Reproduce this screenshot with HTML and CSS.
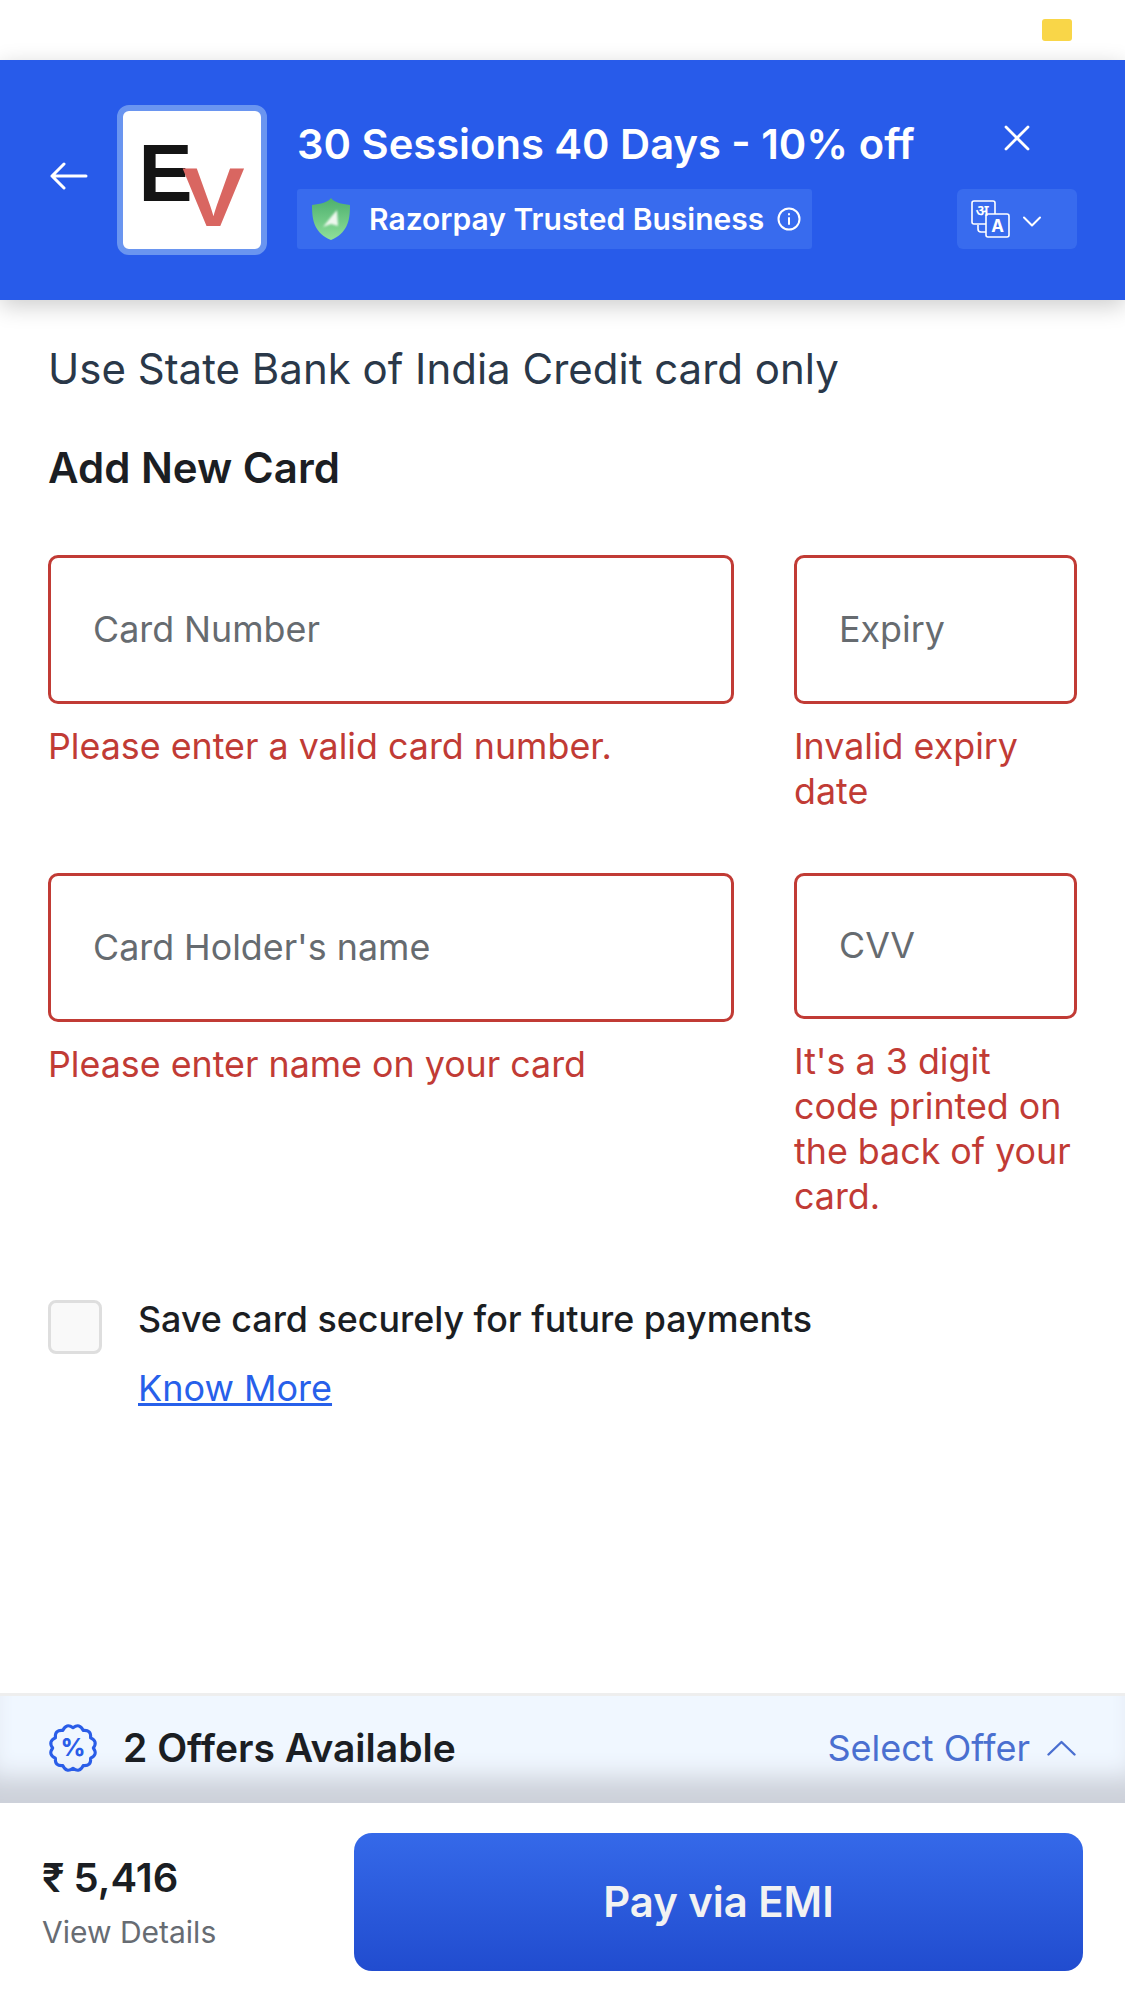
FILE: index.html
```html
<!DOCTYPE html>
<html lang="en">
<head>
    <meta charset="UTF-8">
    <meta name="viewport" content="width=device-width, initial-scale=1.0">
    <title>Checkout</title>
    <link rel="stylesheet" href="styles.css">
</head>
<body>
    <div class="page">
        <!-- Status strip -->
        <div class="topstrip"><span class="topstrip-pill"></span></div>

        <!-- Header -->
        <header class="header">
            <svg class="back-icon" viewBox="0 0 38 28" fill="none" stroke="#fff" stroke-width="3" stroke-linecap="round" stroke-linejoin="round">
                <path d="M2 14H36M14 2L2 14L14 26"/>
            </svg>
            <div class="logo">
                <svg viewBox="0 0 138 138" width="138" height="138">
                    <text class="logo-e" x="15.5" y="90">E</text>
                    <text class="logo-v" transform="translate(59 115) scale(1.16 1.03)">V</text>
                </svg>
            </div>
            <div class="header-info">
                <h1 class="merchant">30 Sessions 40 Days - 10% off</h1>
                <div class="trust">
                    <svg class="shield" viewBox="0 0 40 46">
                        <defs>
                            <linearGradient id="shieldFill" x1="0" y1="0" x2="0" y2="1">
                                <stop offset="0" stop-color="#4caf6d"/>
                                <stop offset="1" stop-color="#8fe09a"/>
                            </linearGradient>
                            <filter id="soft"><feGaussianBlur stdDeviation="1"/></filter>
                        </defs>
                        <path d="M20 2C23 6 30 8 39 9C39 26 36 37 20 44C4 37 1 26 1 9C10 8 17 6 20 2Z" fill="url(#shieldFill)"/>
                        <path d="M12 31L20 21L26 14L27 30L20 28Z" fill="#eef8ee" filter="url(#soft)"/>
                    </svg>
                    <span class="trust-text">Razorpay Trusted Business</span>
                    <svg class="info-icon" viewBox="0 0 24 24" fill="none" stroke="#fff" stroke-width="2" stroke-linecap="round">
                        <circle cx="12" cy="12" r="10.5"/>
                        <path d="M12 11V17M12 7V7.4"/>
                    </svg>
                </div>
            </div>
            <div class="header-side">
                <svg class="close-icon" viewBox="0 0 26 26" fill="none" stroke="#fff" stroke-width="2.8" stroke-linecap="round">
                    <path d="M2 2L24 24M24 2L2 24"/>
                </svg>
                <div class="lang">
                    <svg class="lang-icon" viewBox="0 0 40 38" fill="none" stroke="#fff" stroke-width="1.6">
                        <path d="M7 25V29C7 31 8 32 10 32H15"/>
                        <rect x="1" y="1" width="23" height="23" rx="2"/>
                        <rect x="15" y="14" width="23" height="23" rx="2" fill="#386bee"/>
                        <text class="lang-a" x="26.5" y="32">A</text>
                        <text class="lang-hi" x="11" y="16">अ</text>
                    </svg>
                    <svg class="chevron-down" viewBox="0 0 18 11" fill="none" stroke="#fff" stroke-width="2" stroke-linecap="round" stroke-linejoin="round">
                        <path d="M1 1.5L9 9.5L17 1.5"/>
                    </svg>
                </div>
            </div>
        </header>

        <main class="content">
            <p class="instruction">Use State Bank of India Credit card only</p>
            <h2 class="section-title">Add New Card</h2>

            <div class="card-form">
                <div class="field">
                    <div class="input">Card Number</div>
                    <p class="error">Please enter a valid card number.</p>
                </div>
                <div class="field">
                    <div class="input">Expiry</div>
                    <p class="error">Invalid expiry date</p>
                </div>
                <div class="field">
                    <div class="input">Card Holder's name</div>
                    <p class="error">Please enter name on your card</p>
                </div>
                <div class="field">
                    <div class="input input-short">CVV</div>
                    <p class="error">It's a 3 digit code printed on the back of your card.</p>
                </div>
            </div>

            <div class="save-card">
                <span class="checkbox"></span>
                <div>
                    <div class="save-text">Save card securely for future payments</div>
                    <a class="know-more" href="#">Know More</a>
                </div>
            </div>
        </main>

        <!-- Offers -->
        <div class="offers">
            <svg class="offer-icon" viewBox="0 0 48 48">
                <path fill="none" stroke="#2a5de8" stroke-width="3" stroke-linejoin="round" d="M43.5 24Q48.15 30.47 40.9 33.75Q41.68 41.68 33.75 40.9Q30.47 48.15 24 43.5Q17.53 48.15 14.25 40.9Q6.32 41.68 7.1 33.75Q-.15 30.47 4.5 24Q-.15 17.53 7.1 14.25Q6.32 6.32 14.25 7.1Q17.53 -.15 24 4.5Q30.47 -.15 33.75 7.1Q41.68 6.32 40.9 14.25Q48.15 17.53 43.5 24Z"/>
                <text class="offer-percent" x="24" y="32">%</text>
            </svg>
            <span class="offers-title">2 Offers Available</span>
            <span class="select-offer">Select Offer</span>
            <svg class="chevron-up" viewBox="0 0 29 16" fill="none" stroke="#4a6fd0" stroke-width="2.4" stroke-linecap="round" stroke-linejoin="round">
                <path d="M1.5 14.5L14.5 2L27.5 14.5"/>
            </svg>
        </div>

        <!-- Footer -->
        <footer class="footer">
            <div class="amount">
                <div class="price">₹ 5,416</div>
                <div class="view-details">View Details</div>
            </div>
            <button class="pay-btn">Pay via EMI</button>
        </footer>
    </div>
</body>
</html>
```

FILE: styles.css
```css
* {
    box-sizing: border-box;
    margin: 0;
    padding: 0;
}

body {
    font-family: Inter, "Noto Sans", sans-serif;
    background-color: #fff;
    color: #1b1e23;
}

.page {
    height: 2001px;
    display: flex;
    flex-direction: column;
    overflow: hidden;
}

.topstrip {
    height: 60px;
    padding: 19px 53px 0 0;
    display: flex;
    justify-content: flex-end;
}

.topstrip-pill {
    width: 30px;
    height: 22px;
    border-radius: 3px;
    background: #f9d648;
}

.header {
    position: relative;
    z-index: 1;
    height: 240px;
    background: #285bea;
    color: #fff;
    display: flex;
    align-items: flex-start;
    padding: 45px 48px 0 50px;
    box-shadow: 0 6px 22px rgba(0, 0, 0, 0.2);
}

.back-icon {
    width: 38px;
    height: 28px;
    margin-top: 57px;
    margin-right: 29px;
    flex: none;
}

.logo {
    width: 150px;
    height: 150px;
    flex: none;
    border: 6px solid #6a95f0;
    border-radius: 12px;
    background: #fff;
    overflow: hidden;
}

.logo svg {
    display: block;
}

.logo-e {
    font: 700 81px "Liberation Sans", sans-serif;
    fill: #141414;
}

.logo-v {
    font: 700 81px "Liberation Sans", sans-serif;
    fill: #d96661;
}

.header-info {
    margin-left: 30px;
    width: 640px;
}

.merchant {
    font-size: 41.7px;
    font-weight: 600;
    line-height: 48px;
    margin: 15px 0 21px 0;
    white-space: nowrap;
}

.trust {
    width: 515px;
    height: 60px;
    border-radius: 3px;
    background: #386bee;
    display: flex;
    align-items: center;
    padding-left: 14px;
}

.shield {
    width: 40px;
    height: 46px;
    flex: none;
}

.trust-text {
    margin-left: 18px;
    font-size: 30px;
    font-weight: 600;
    white-space: nowrap;
}

.info-icon {
    width: 24px;
    height: 24px;
    margin-left: 13px;
    flex: none;
}

.header-side {
    margin-left: auto;
    width: 120px;
    display: flex;
    flex-direction: column;
    align-items: center;
}

.close-icon {
    width: 26px;
    height: 26px;
    margin-top: 20px;
    margin-bottom: 38px;
}

.lang {
    width: 120px;
    height: 60px;
    border-radius: 6px;
    background: #386bee;
    display: flex;
    align-items: center;
    padding-left: 14px;
}

.lang-icon {
    width: 40px;
    height: 38px;
    flex: none;
}

.lang-a {
    font: 700 17px Inter, sans-serif;
    fill: #fff;
    stroke: none;
    text-anchor: middle;
}

.lang-hi {
    font: 600 16px "Noto Sans", sans-serif;
    fill: #fff;
    stroke: none;
    text-anchor: middle;
}

.chevron-down {
    width: 18px;
    height: 11px;
    margin-left: 12px;
    margin-top: 5px;
}

.content {
    flex: 1;
    padding: 44px 48px 0;
}

.instruction {
    font-size: 42px;
    line-height: 50px;
    color: #2a3849;
}

.section-title {
    font-size: 42px;
    font-weight: 600;
    line-height: 50px;
    margin-top: 49px;
}

.card-form {
    display: grid;
    grid-template-columns: 686px 283px;
    column-gap: 60px;
    row-gap: 59px;
    margin-top: 62px;
}

.input {
    height: 149px;
    border: 3px solid #c13b35;
    border-radius: 10px;
    display: flex;
    align-items: center;
    padding: 0 0 2px 42px;
    font-size: 35.8px;
    color: #666b70;
}

.input-short {
    height: 146px;
}

.error {
    margin-top: 20px;
    font-size: 35.8px;
    line-height: 45px;
    color: #c13b35;
}

.save-card {
    display: flex;
    margin-top: 81px;
}

.checkbox {
    width: 54px;
    height: 54px;
    flex: none;
    border: 3px solid #dedede;
    border-radius: 8px;
    background: #f9f9f9;
    margin-right: 36px;
}

.save-text {
    font-size: 35.8px;
    font-weight: 500;
    line-height: 40px;
    margin-top: -1px;
}

.know-more {
    display: inline-block;
    margin-top: 29px;
    font-size: 36px;
    line-height: 40px;
    color: #2760ea;
}

.offers {
    height: 110px;
    border-top: 3px solid #eeeeee;
    background: #f0f7ff;
    box-shadow: inset 0 -38px 24px -12px #cdd1da;
    display: flex;
    align-items: center;
    padding: 0 49px 4px 48px;
}

.offer-icon {
    width: 50px;
    height: 50px;
    flex: none;
}

.offer-percent {
    font: 800 23px Inter, sans-serif;
    fill: #2a5de8;
    text-anchor: middle;
}

.offers-title {
    margin-left: 25px;
    font-size: 39px;
    font-weight: 600;
}

.select-offer {
    margin-left: auto;
    font-size: 36px;
    color: #4a6fd0;
}

.chevron-up {
    width: 29px;
    height: 16px;
    margin-left: 17px;
}

.footer {
    height: 198px;
    display: flex;
    padding: 30px 41px 30px 42px;
}

.amount {
    width: 312px;
    flex: none;
    padding-top: 21px;
}

.price {
    font-size: 40px;
    font-weight: 600;
    line-height: 48px;
    word-spacing: -1px;
}

.view-details {
    margin-top: 12px;
    font-size: 30px;
    line-height: 36px;
    color: #676c73;
}

.pay-btn {
    width: 729px;
    height: 138px;
    border: none;
    border-radius: 18px;
    background: linear-gradient(#3569e9, #214ccf);
    color: #f2f2f2;
    font-family: inherit;
    font-size: 41.8px;
    font-weight: 600;
}
```
